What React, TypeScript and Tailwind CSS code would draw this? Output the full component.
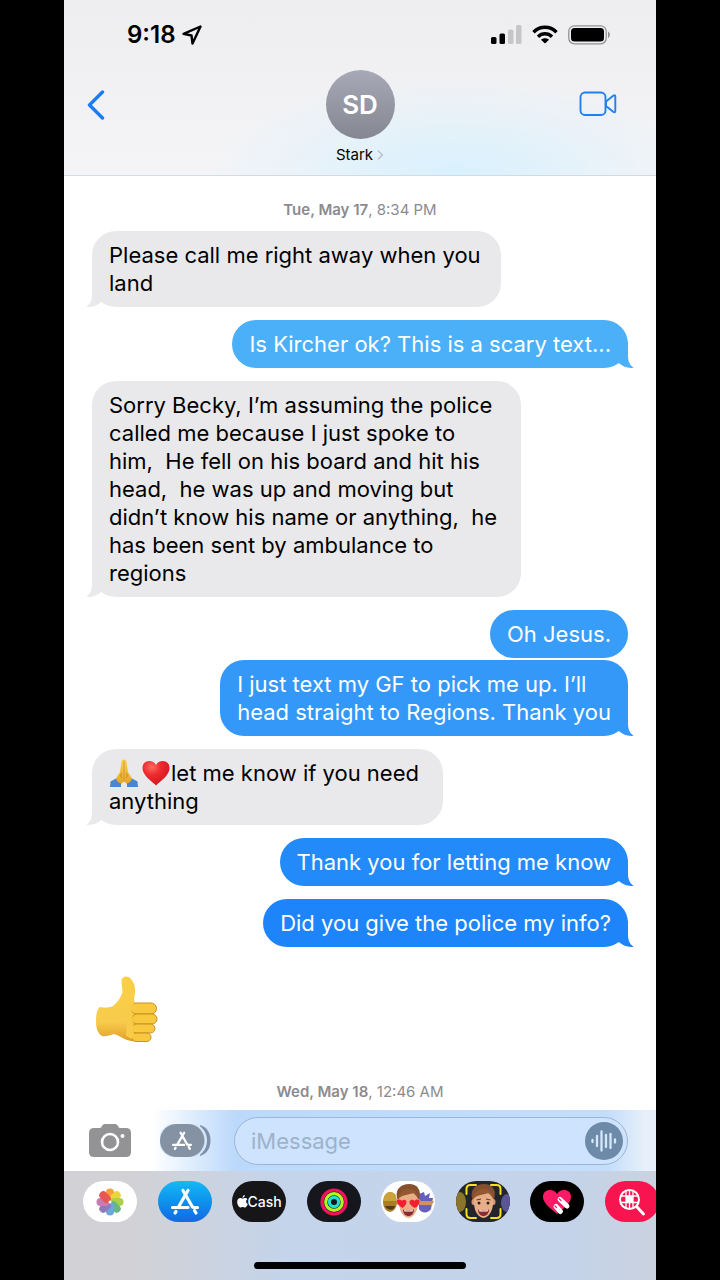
import React, { useState } from 'react';

interface Message {
  id: number;
  from: 'me' | 'them';
  text: string;
  color: string;
  width?: string;
  tail?: boolean;
  tight?: boolean;
  emoji?: boolean;
}

const messages: Message[] = [
  { id: 1, from: 'them', text: 'Please call me right away when you\nland', color: 'bg-[#e9e9eb] text-[#e9e9eb]', width: 'w-[409px]', tail: true },
  { id: 2, from: 'me', text: 'Is Kircher ok? This is a scary text...', color: 'bg-[#4bb0f8] text-[#4bb0f8]', tail: true },
  {
    id: 3,
    from: 'them',
    text: 'Sorry Becky, I’m assuming the police\ncalled me because I just spoke to\nhim,  He fell on his board and hit his\nhead,  he was up and moving but\ndidn’t know his name or anything,  he\nhas been sent by ambulance to\nregions',
    color: 'bg-[#e9e9eb] text-[#e9e9eb]',
    width: 'w-[429px]',
    tail: true,
  },
  { id: 4, from: 'me', text: 'Oh Jesus.', color: 'bg-[#389df8] text-[#389df8]' },
  { id: 5, from: 'me', text: 'I just text my GF to pick me up. I’ll\nhead straight to Regions. Thank you', color: 'bg-[#3398f8] text-[#3398f8]', tail: true, tight: true },
  { id: 6, from: 'them', text: 'let me know if you need\nanything', color: 'bg-[#e9e9eb] text-[#e9e9eb]', width: 'w-[351px]', tail: true, emoji: true },
  { id: 7, from: 'me', text: 'Thank you for letting me know', color: 'bg-[#238af9] text-[#238af9]', tail: true },
  { id: 8, from: 'me', text: 'Did you give the police my info?', color: 'bg-[#1d85f9] text-[#1d85f9]', tail: true },
];

const Tail = ({ mine }: { mine: boolean }) => (
  <svg
    viewBox="0 0 26 26"
    className={`absolute bottom-0 h-[26px] w-[26px] ${mine ? '-right-[6px] -scale-x-100' : '-left-[6px]'}`}
    fill="currentColor"
    aria-hidden="true"
  >
    <path d="M6 0V13C6 19 4.500 23 .5 25.700C6 26.500 11 24.500 14.500 21.500L24 18V0Z" />
  </svg>
);

const PrayEmoji = () => (
  <svg viewBox="0 0 30 30" className="inline-block h-[30px] w-[30px] align-middle" role="img" aria-label="Folded hands">
    <defs>
      <linearGradient id="pray" x1="0" y1="0" x2="0" y2="1">
        <stop offset="0" stopColor="#fbd44b" />
        <stop offset="1" stopColor="#e9a427" />
      </linearGradient>
    </defs>
    <path d="M1 29 1.500 23.500 7 20.500 12 24 12 29Z" fill="#4a86d0" />
    <path d="M29 29 28.500 23.500 23 20.500 18 24 18 29Z" fill="#4a86d0" />
    <path d="M14.800 2C13.300 1 12.600 2 12.400 4L11 14 7 20.500C8 24 10.500 25.500 13 25.500L14.800 23Z" fill="url(#pray)" />
    <path d="M15.200 2C16.700 1 17.400 2 17.600 4L19 14 23 20.500C22 24 19.500 25.500 17 25.500L15.200 23Z" fill="url(#pray)" />
    <path d="M15 2.500V24M12.500 15C11.500 17 11.500 19 13 20M17.500 15C18.500 17 18.500 19 17 20" fill="none" stroke="#b97a1d" strokeWidth=".7" />
  </svg>
);

const HeartEmoji = () => (
  <svg viewBox="0 0 30 30" className="inline-block h-[30px] w-[30px] align-middle" role="img" aria-label="Red heart">
    <defs>
      <radialGradient id="heart" cx=".35" cy=".25" r=".8">
        <stop offset="0" stopColor="#ff6a60" />
        <stop offset=".4" stopColor="#ee2c2f" />
        <stop offset="1" stopColor="#d0121f" />
      </radialGradient>
    </defs>
    <path d="M15 27.500C12 24 1.500 18 1.500 10C1.500 5.500 4.500 3 8.300 3C11.300 3 13.800 4.500 15 7C16.200 4.500 18.700 3 21.700 3C25.500 3 28.500 5.500 28.500 10C28.500 18 18 24 15 27.500Z" fill="url(#heart)" />
  </svg>
);

const ThumbsUp = () => (
  <svg viewBox="0 0 62 67" className="h-[67px] w-[62px]" role="img" aria-label="Thumbs up">
    <defs>
      <linearGradient id="thumb" x1="0" y1="0" x2="0" y2="1">
        <stop offset="0" stopColor="#fad045" />
        <stop offset=".7" stopColor="#f8cb4d" />
        <stop offset="1" stopColor="#dfa027" />
      </linearGradient>
    </defs>
    <path
      d="M4 31C9 32 14 31.500 17 30C22 26 25 21 26.500 16L25.500 5C25.500 0 32 -1 35 3C39 7 40 14 38.500 20C38 23 38 25 39.500 27L44 62C45 66 38 66 31 64C26 62.500 23 59 18 58C14 59 10 61 6 60C1 57 0 51 0 45C0 39 1 33 4 31Z"
      fill="url(#thumb)"
    />
    <g fill="#f8c83f" stroke="#cc9025" strokeWidth="1">
      <rect x="35" y="27" width="25.500" height="11" rx="5.500" />
      <rect x="36" y="38" width="25" height="10" rx="5" />
      <rect x="36" y="48" width="23" height="9" rx="4.500" />
      <rect x="36" y="57" width="19" height="8.500" rx="4.200" />
    </g>
    <path d="M39 26C36 30 35 34 36.500 40L38 59 36 63 30 60 32 28Z" fill="#f8cb48" />
  </svg>
);

const AppStoreGlyph = ({ className }: { className: string }) => (
  <svg viewBox="0 0 30 28" className={className} fill="none" stroke="currentColor" strokeWidth="3.200" strokeLinecap="round" aria-hidden="true">
    <path d="M13 2.500 22.500 19M18 2.500 9 18M2.500 19.500H18M24 19.500H27.500M24.500 22.500 26 25M6 23.500 5 25" />
  </svg>
);

const PhotosIcon = () => (
  <svg viewBox="0 0 30 30" className="h-[30px] w-[30px]" aria-hidden="true">
    <g opacity=".88">
      <rect x="11" y="1.500" width="8" height="13" rx="4" fill="#f79420" />
      <rect x="11" y="1.500" width="8" height="13" rx="4" fill="#e6d21f" transform="rotate(45 15 15)" />
      <rect x="11" y="1.500" width="8" height="13" rx="4" fill="#a5c930" transform="rotate(90 15 15)" />
      <rect x="11" y="1.500" width="8" height="13" rx="4" fill="#51b070" transform="rotate(135 15 15)" />
      <rect x="11" y="1.500" width="8" height="13" rx="4" fill="#5a9cd2" transform="rotate(180 15 15)" />
      <rect x="11" y="1.500" width="8" height="13" rx="4" fill="#8068b4" transform="rotate(225 15 15)" />
      <rect x="11" y="1.500" width="8" height="13" rx="4" fill="#c06aa8" transform="rotate(270 15 15)" />
      <rect x="11" y="1.500" width="8" height="13" rx="4" fill="#e5403a" transform="rotate(315 15 15)" />
    </g>
    <circle cx="15" cy="15" r="1.500" fill="#fff" />
  </svg>
);

const AppleLogo = () => (
  <svg viewBox="0 0 12 14" className="h-[13px] w-[11px]" fill="#fff" aria-hidden="true">
    <path d="M8.500 0C8.600 1.500 7.400 3 6 3C5.900 1.600 7.100.2 8.500 0ZM6.200 3.900C6.800 3.900 7.600 3.200 8.800 3.200C9.900 3.200 10.900 3.800 11.400 4.600C9.300 5.800 9.600 8.900 11.800 9.800C11.200 11.600 10 13.600 8.600 13.600C7.700 13.600 7.300 13 6.200 13C5.100 13 4.700 13.600 3.800 13.600C2.200 13.600.2 10.400.2 7.600C.2 4.900 1.900 3.300 3.600 3.300C4.800 3.300 5.500 3.900 6.200 3.900Z" />
  </svg>
);

const RingsIcon = () => (
  <svg viewBox="0 0 30 30" className="h-[30px] w-[30px]" fill="none" strokeWidth="3.200" aria-hidden="true">
    <circle cx="15" cy="15" r="12" stroke="#f5115b" />
    <circle cx="15" cy="15" r="8.300" stroke="#b3f520" />
    <circle cx="15" cy="15" r="4.600" stroke="#1fe0cf" />
  </svg>
);

const Face = () => (
  <>
    <path d="M16 17C14 8 20 3 28 3C36 3 41 9 38 18L36 22H18Z" fill="#85502d" />
    <ellipse cx="17.500" cy="21" rx="2" ry="3" fill="#d99872" />
    <ellipse cx="37.500" cy="21" rx="2" ry="3" fill="#d99872" />
    <path d="M18 16C20 11 24 12 28 11C33 11 36 14 37 17C38 26 35 36 27.500 37C20 36 17 26 18 16Z" fill="#e8ae89" />
    <path d="M17 18C18 11 22 8 29 8C34 8 37 12 37.500 18C35 15 34 13 32 12C28 14 22 13 17 18Z" fill="#95592f" />
    <path d="M22 28.500C25 30 30 30 33 28.500C33 33 30 35 27.500 35C25 35 22 33 22 28.500Z" fill="#8c2930" />
    <path d="M23 29C26 30 29 30 32 29L31.500 30.500H23.500Z" fill="#fff" />
  </>
);

const HeartEyesMemoji = () => (
  <svg viewBox="0 0 54 41" className="h-[41px] w-[54px]" aria-hidden="true">
    <ellipse cx="9" cy="21" rx="7" ry="10" fill="#a77e25" />
    <path d="M3 16C6 9 13 10 15 15V20H3Z" fill="#caa13a" />
    <path d="M4 25H14C13 30 7 30 4 25Z" fill="#54391a" />
    <path d="M38 13 43 11 44 15 49 12 48 17 52 17 50 28C47 33 40 32 38 28Z" fill="#665fc0" />
    <path d="M39 20H53L51 24H39Z" fill="#d39158" />
    <Face />
    <path d="M21.500 27C18 24.500 15 22 16 19.500C17 18 20 18 21 20C22 18 25.500 18.500 25.500 21C25.500 23.500 23 26 21.500 27Z" fill="#f2202f" />
    <path d="M33.500 27C30 24.500 28 23 28.500 20.500C29.500 18 32.500 18.500 33.500 20C34.500 18 38 18 38.500 20C39 23 36 26 33.500 27Z" fill="#f2202f" />
  </svg>
);

const FramedMemoji = () => (
  <svg viewBox="0 0 54 41" className="h-[41px] w-[54px]" aria-hidden="true">
    <ellipse cx="4" cy="21" rx="6" ry="10" fill="#8b752c" />
    <ellipse cx="51" cy="22" rx="6" ry="9" fill="#5a5696" />
    <Face />
    <path d="M20.500 19 25 18M30 18 34.500 19" stroke="#6b3b20" strokeWidth="1.200" />
    <circle cx="23" cy="22" r="1.500" fill="#352016" />
    <circle cx="32" cy="22" r="1.500" fill="#352016" />
    <path d="M10.500 13V8Q10.500 4 14.500 4H20M35 4H40.500Q44.500 4 44.500 8V13M44.500 28V33Q44.500 37 40.500 37H35M20 37H14.500Q10.500 37 10.500 33V28" fill="none" stroke="#f7e21a" strokeWidth="2" strokeLinecap="round" />
  </svg>
);

const DigitalTouchIcon = () => (
  <svg viewBox="0 0 30 28" className="h-[28px] w-[30px]" aria-hidden="true">
    <path d="M15 26C11 22 1 16 1 9C1 4.500 4 2 8 2C11 2 13.500 3.500 15 6C16.500 3.500 19 2 22 2C26 2 29 4.500 29 9C29 16 19 22 15 26Z" fill="#fb1a66" />
    <path d="M14 18.500 18.500 23.500M18 11.500 25 18" stroke="#fff" strokeWidth="5" strokeLinecap="round" />
    <path d="M13 18 14.500 19.500M17.200 10.800 19 12.500" stroke="#fb1a66" strokeWidth="1.200" strokeLinecap="round" />
  </svg>
);

const ImageSearchIcon = () => (
  <svg viewBox="0 0 28 28" className="h-[28px] w-[28px]" fill="none" stroke="#fff" aria-hidden="true">
    <circle cx="11.500" cy="11.500" r="9.500" strokeWidth="2" />
    <path d="M2 8H21M2 14.500H21M8 2.500V21M15 2.500V21M11.500 2V21" strokeWidth="1.300" />
    <rect x="8.500" y="8.500" width="6" height="6" fill="#fff" />
    <path d="M19 19 25.500 26" strokeWidth="3" strokeLinecap="round" />
  </svg>
);

const apps = [
  { name: 'Photos', bg: 'bg-white', icon: <PhotosIcon /> },
  { name: 'App Store', bg: 'bg-linear-to-b from-[#18b9f5] to-[#1767e2]', icon: <AppStoreGlyph className="h-[28px] w-[30px] text-white" /> },
  {
    name: 'Apple Cash',
    bg: 'bg-[#161618]',
    icon: (
      <span className="flex items-center text-sm font-medium text-white">
        <AppleLogo />
        Cash
      </span>
    ),
  },
  { name: 'Fitness', bg: 'bg-[#15171c]', icon: <RingsIcon /> },
  { name: 'Memoji stickers', bg: 'bg-white', icon: <HeartEyesMemoji /> },
  { name: 'Memoji', bg: 'bg-[#22252a]', icon: <FramedMemoji /> },
  { name: 'Digital Touch', bg: 'bg-black', icon: <DigitalTouchIcon /> },
  { name: '#images', bg: 'bg-[#f7144f]', icon: <ImageSearchIcon /> },
];

const Header = () => (
  <header className="h-44 border-b border-[#d3dbe0] bg-[radial-gradient(ellipse_42%_55%_at_66%_100%,#d8f1fe,transparent),linear-gradient(to_bottom,#eeeef0,#f4f4f6)]">
    <div className="flex h-[70px] items-center justify-between pr-[45px] pl-[63px]">
      <div className="flex items-center gap-[6px] text-2xl font-semibold text-black">
        9:18
        <svg viewBox="0 0 20 20" className="h-5 w-5" fill="none" stroke="#000" strokeWidth="2.400" strokeLinejoin="round" aria-hidden="true">
          <path d="M18.500 1.500 1.500 8.800 9.500 10.500 10.500 18.500Z" />
        </svg>
      </div>
      <div className="flex items-center gap-[10px]">
        <svg viewBox="0 0 31 20" className="h-5 w-[31px]" aria-hidden="true">
          <rect x="0" y="12" width="5.500" height="7" rx="1.500" />
          <rect x="8.500" y="8.500" width="5.500" height="10.500" rx="1.500" />
          <rect x="17" y="4.500" width="5.500" height="14.500" rx="1.500" fill="#c6c6c8" />
          <rect x="25" y="0" width="5.500" height="19" rx="1.500" fill="#c6c6c8" />
        </svg>
        <svg viewBox="0 0 26 20" className="h-5 w-[26px]" fill="none" stroke="#000" strokeWidth="3.400" aria-hidden="true">
          <path d="M1.500 7.200C8 .6 18 .6 24.500 7.200" />
          <path d="M6 11.700C10 7.800 16 7.800 20 11.700" />
          <path d="M13 18.500 9 14.800C11.300 12.800 14.700 12.800 17 14.800Z" fill="#000" stroke="none" />
        </svg>
        <svg viewBox="0 0 43 20" className="h-5 w-[43px]" aria-hidden="true">
          <rect x=".8" y=".8" width="37.400" height="18" rx="5.500" fill="none" stroke="#929294" strokeWidth="1.300" />
          <rect x="3" y="3" width="33" height="13.600" rx="3.500" />
          <path d="M40 6.500C42.500 7.500 42.500 12 40 13Z" fill="#929294" />
        </svg>
      </div>
    </div>
    <div className="grid grid-cols-[1fr_auto_1fr] items-start px-[23px]">
      <button type="button" aria-label="Back" className="mt-5 justify-self-start">
        <svg viewBox="0 0 18 30" className="h-[30px] w-[18px]" fill="none" stroke="#1a7cf5" strokeWidth="3.400" strokeLinecap="round" strokeLinejoin="round" aria-hidden="true">
          <path d="M15.500 2 2.500 15 15.500 28" />
        </svg>
      </button>
      <button type="button" className="flex flex-col items-center gap-[6px] text-black">
        <span className="flex size-[69px] items-center justify-center rounded-full bg-linear-to-b from-[#a7aab6] to-[#848792] text-[26px] font-semibold text-white">SD</span>
        <span className="flex items-center gap-1 text-[15px] leading-5">
          Stark
          <svg viewBox="0 0 7 10" className="h-[10px] w-[7px]" fill="none" stroke="#b5bcc2" strokeWidth="1.300" aria-hidden="true">
            <path d="M1 .8 5.500 5 1 9.200" />
          </svg>
        </span>
      </button>
      <button type="button" aria-label="FaceTime" className="mt-[21px] mr-4 justify-self-end">
        <svg viewBox="0 0 38 26" className="h-[26px] w-[38px]" fill="none" stroke="#1f80f6" strokeWidth="1.900" strokeLinejoin="round" aria-hidden="true">
          <rect x="1.500" y="1.500" width="25" height="22.500" rx="4.500" />
          <path d="M27 10.500 34.500 4.500Q36.300 3.500 36.300 5.500V20Q36.300 22 34.500 21L27 15Z" />
        </svg>
      </button>
    </div>
  </header>
);

const Stamp = ({ day, time }: { day: string; time: string }) => (
  <p className="text-center text-[15px] leading-5 text-[#8b8b8f]">
    <span className="font-semibold">{day}</span>, {time}
  </p>
);

const Bubble = ({ message }: { message: Message }) => {
  const mine = message.from === 'me';
  return (
    <li className={`flex ${mine ? 'justify-end' : 'justify-start'} ${message.tight ? 'mt-[2px]' : 'mt-[13px]'}`}>
      <div className={`relative rounded-[24px] px-[17px] py-[10px] ${message.color} ${message.width ?? ''}`}>
        {message.tail && <Tail mine={mine} />}
        <p className={`relative text-[22px] leading-7 whitespace-pre ${mine ? 'text-white' : 'text-black'}`}>
          {message.emoji && (
            <span className="inline-flex h-7 items-center gap-[2px] align-top">
              <PrayEmoji />
              <HeartEmoji />
            </span>
          )}
          {message.text}
        </p>
      </div>
    </li>
  );
};

const Composer = () => {
  const [draft, setDraft] = useState('');

  return (
    <form
      className="flex h-[61px] items-center bg-[linear-gradient(to_right,#fff_15%,#bbd9fb_29%,#bfdcfc_60%,#c4defa_92%,#e6effa_98%)] pr-7 pl-[25px]"
      onSubmit={(e) => e.preventDefault()}
    >
      <button type="button" aria-label="Camera">
        <svg viewBox="0 0 42 33" className="h-[33px] w-[42px]" aria-hidden="true">
          <path d="M5 4H11C13 4 12.500 0 16 0H26C29.500 0 29 4 31 4H37Q42 4 42 9V28Q42 33 37 33H5Q0 33 0 28V9Q0 4 5 4Z" fill="#939395" />
          <circle cx="21" cy="18" r="8" fill="none" stroke="#fff" strokeWidth="2.600" />
          <circle cx="33.500" cy="12" r="2" fill="#fff" />
        </svg>
      </button>
      <button type="button" aria-label="Apps" className="relative ml-[29px]">
        <svg viewBox="0 0 51 33" className="h-[33px] w-[51px]" aria-hidden="true">
          <path d="M40 1C47 3 50.500 9 50.500 16.500C50.500 24 47 30 40 32Z" fill="#7d90aa" />
          <rect x="-1" y="-1" width="48" height="35" rx="17" fill="#d4e6fb" />
          <rect x="0" y="0" width="44.500" height="33" rx="16.500" fill="#8592a4" />
        </svg>
        <span className="absolute inset-y-0 left-[11px] flex items-center text-white">
          <AppStoreGlyph className="h-[20px] w-[22px]" />
        </span>
      </button>
      <div className="ml-[23px] flex h-12 min-w-0 flex-1 items-center rounded-full border border-[#9eb6d2] bg-[#cde3fe] pr-1 pl-4">
        <input
          type="text"
          aria-label="Message"
          placeholder="iMessage"
          value={draft}
          onChange={(e) => setDraft(e.target.value)}
          className="min-w-0 flex-1 bg-transparent text-[22px] leading-7 text-black placeholder:text-[#9db2cb] focus:outline-none"
        />
        <button type="button" aria-label="Record audio" className="flex size-[38px] items-center justify-center rounded-full bg-[#6d8aa9]">
          <svg viewBox="0 0 26 22" className="h-[22px] w-[26px]" fill="none" stroke="#d5e7fb" strokeWidth="2.300" strokeLinecap="round" aria-hidden="true">
            <path d="M1.500 10V12M6 6V16M10.500 1.500V20.500M15 5V17M19.500 4V18M24 9.500V12.500" />
          </svg>
        </button>
      </div>
    </form>
  );
};

const App: React.FC = () => {
  return (
    <div className="min-h-screen bg-black px-16 font-[Inter,sans-serif]">
      <div className="flex min-h-screen flex-col overflow-hidden bg-white">
        <Header />

        <main className="flex-1 px-7 pt-6">
          <Stamp day="Tue, May 17" time="8:34 PM" />
          <ul className="-mt-[2px]">
            {messages.map((message) => (
              <Bubble key={message.id} message={message} />
            ))}
          </ul>
          <div className="mt-[29px] mb-[39px] ml-1">
            <ThumbsUp />
          </div>
          <Stamp day="Wed, May 18" time="12:46 AM" />
        </main>

        <Composer />

        <footer className="h-[109px] bg-[linear-gradient(to_right,#d2d2d6_12%,#c4d4eb_38%,#c4d3ea_85%,#cad2df)] pt-[10px]">
          <nav className="-mr-[3px] ml-[19px] flex justify-between">
            {apps.map((app) => (
              <button
                key={app.name}
                type="button"
                aria-label={app.name}
                className={`flex h-[41px] w-[54px] shrink-0 items-center justify-center overflow-hidden rounded-full ${app.bg}`}
              >
                {app.icon}
              </button>
            ))}
          </nav>
          <div className="mx-auto mt-10 h-[7px] w-[212px] rounded-full bg-black" />
        </footer>
      </div>
    </div>
  );
};

export default App;
